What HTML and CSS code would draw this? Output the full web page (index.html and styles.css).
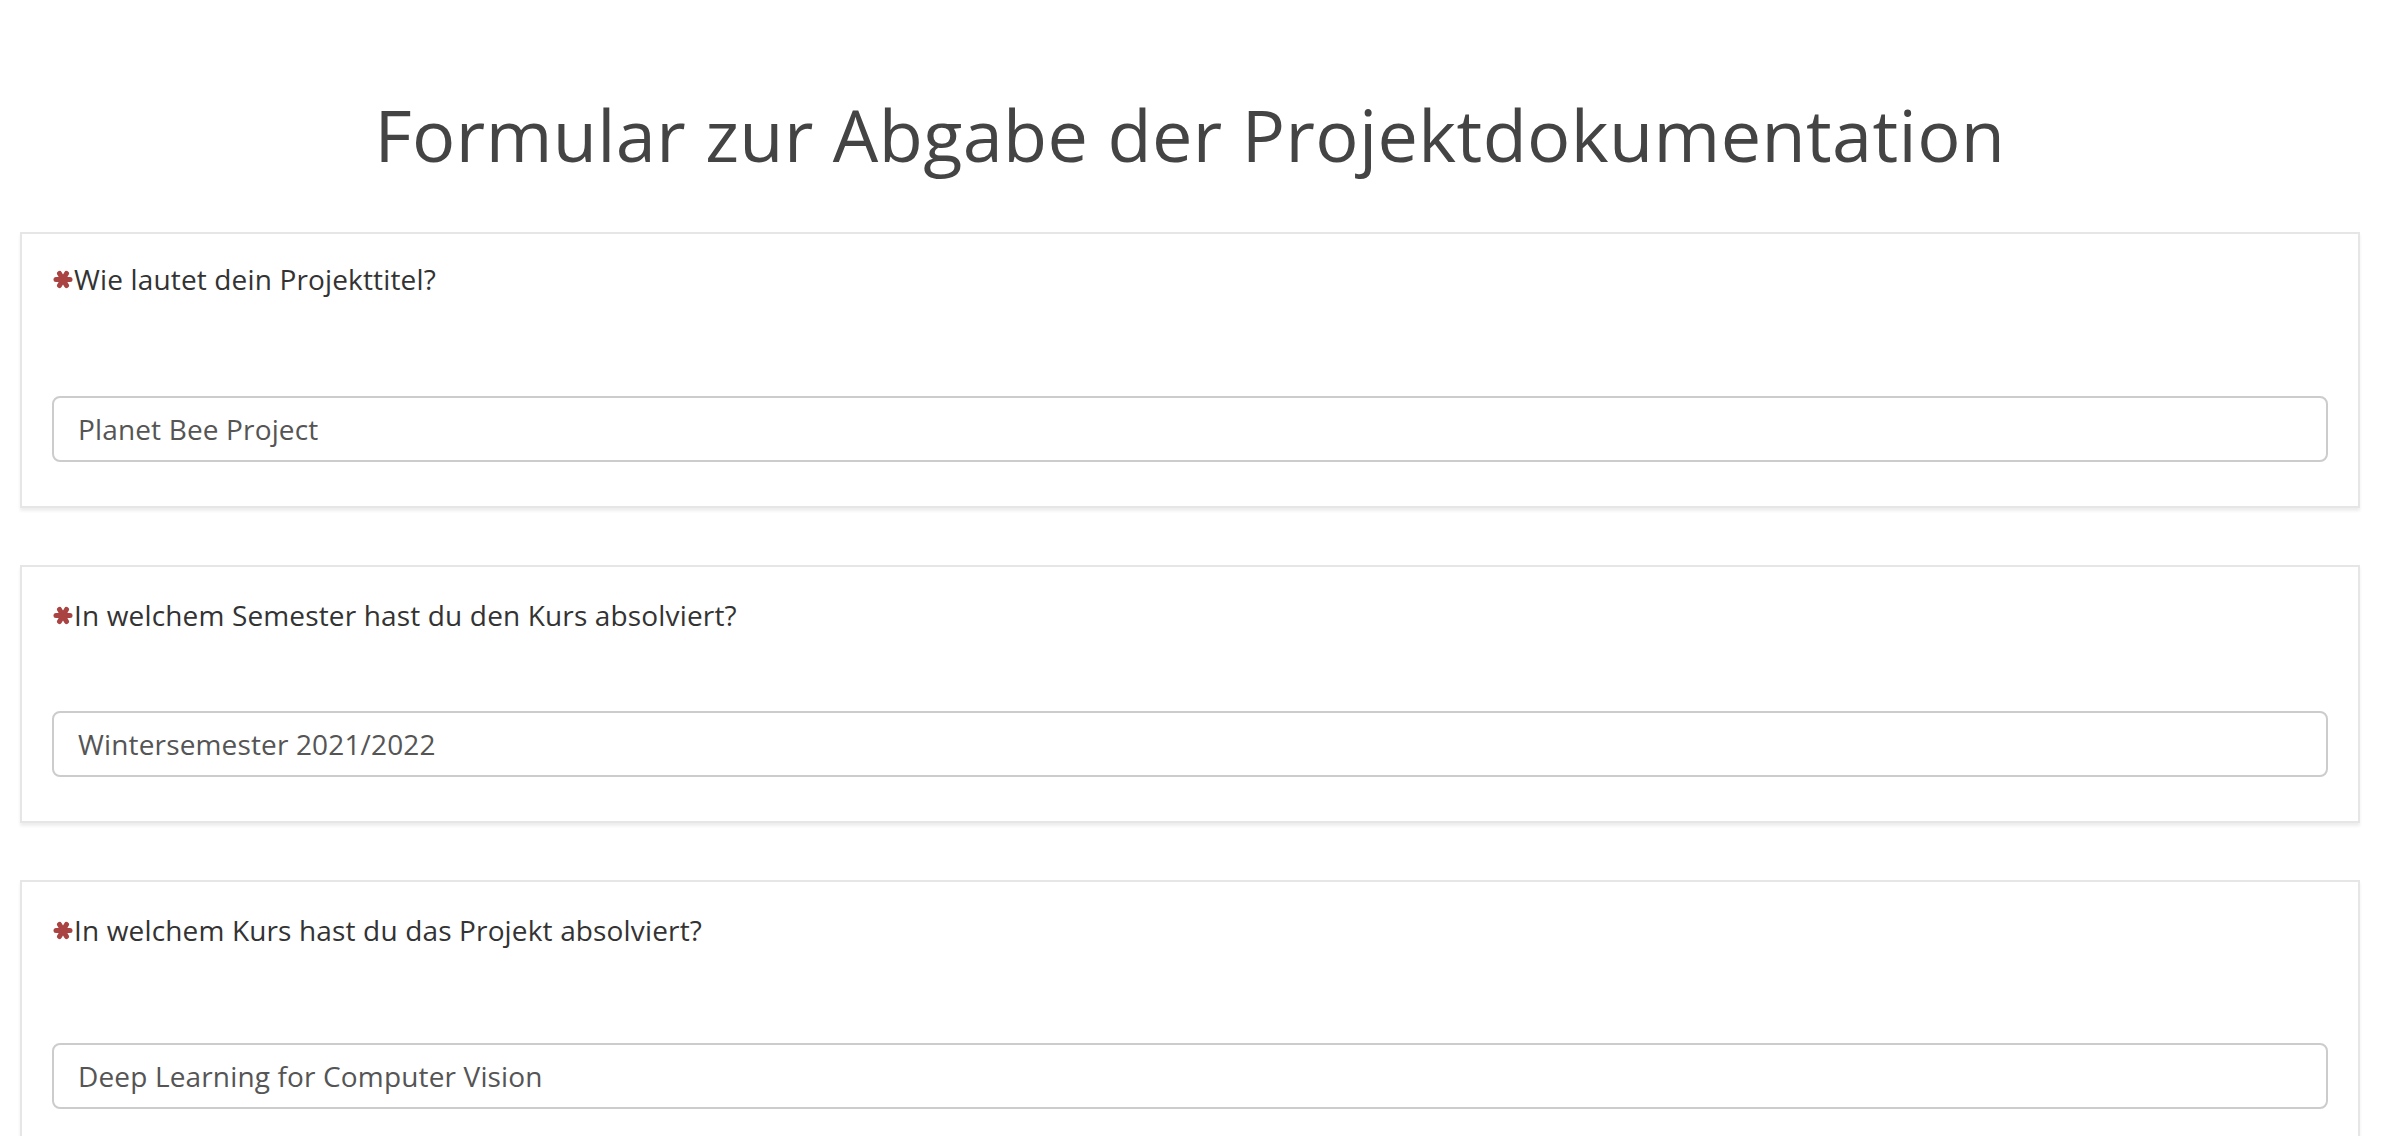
FILE: index.html
```html
<!DOCTYPE html>
<html lang="de">
<head>
<meta charset="utf-8">
<title>Formular zur Abgabe der Projektdokumentation</title>
<link rel="stylesheet" href="styles.css">
</head>
<body>
<div class="page">
  <h1 class="title">Formular zur Abgabe der Projektdokumentation</h1>

  <section class="card card--first">
    <label class="question">
      <svg class="req" viewBox="0 0 20 19" aria-hidden="true"><g stroke="#a94442" stroke-width="5" stroke-linecap="round"><line x1="3" y1="9.5" x2="17" y2="9.5"/><line x1="6.5" y1="3.4" x2="13.5" y2="15.6"/><line x1="13.5" y1="3.4" x2="6.5" y2="15.6"/></g></svg>
      <span>Wie lautet dein Projekttitel?</span>
    </label>
    <input class="field" type="text" value="Planet Bee Project">
  </section>

  <section class="card card--second">
    <label class="question">
      <svg class="req" viewBox="0 0 20 19" aria-hidden="true"><g stroke="#a94442" stroke-width="5" stroke-linecap="round"><line x1="3" y1="9.5" x2="17" y2="9.5"/><line x1="6.5" y1="3.4" x2="13.5" y2="15.6"/><line x1="13.5" y1="3.4" x2="6.5" y2="15.6"/></g></svg>
      <span>In welchem Semester hast du den Kurs absolviert?</span>
    </label>
    <input class="field" type="text" value="Wintersemester 2021/2022">
  </section>

  <section class="card card--third">
    <label class="question">
      <svg class="req" viewBox="0 0 20 19" aria-hidden="true"><g stroke="#a94442" stroke-width="5" stroke-linecap="round"><line x1="3" y1="9.5" x2="17" y2="9.5"/><line x1="6.5" y1="3.4" x2="13.5" y2="15.6"/><line x1="13.5" y1="3.4" x2="6.5" y2="15.6"/></g></svg>
      <span>In welchem Kurs hast du das Projekt absolviert?</span>
    </label>
    <input class="field" type="text" value="Deep Learning for Computer Vision">
  </section>
</div>
</body>
</html>
```

FILE: styles.css
```css
html, body {
  margin: 0;
  padding: 0;
  background: #ffffff;
}

body {
  font-family: "Open Sans", "Noto Sans", sans-serif;
  color: #333333;
  font-size: 28px;
  line-height: 40px;
}

.page {
  padding: 0 22px 40px 20px;
  display: flex;
  flex-direction: column;
}

.title {
  margin: 94px 0 58px;
  font-size: 72px;
  line-height: 80px;
  font-weight: 400;
  letter-spacing: 0.4px;
  color: #444444;
  text-align: center;
}

.card {
  border: 2px solid #e6e6e6;
  box-shadow: 0 3px 3px rgba(0, 0, 0, 0.07);
  background: #ffffff;
  padding: 25px 30px 44px;
  margin-bottom: 57px;
  display: flex;
  flex-direction: column;
}

.card--first .question { margin-bottom: 97px; }
.card--second { padding-top: 28px; padding-bottom: 44px; }
.card--second .question { margin-bottom: 76px; }
.card--third { padding-top: 28px; }
.card--third .question { margin-bottom: 93px; }

.question {
  display: flex;
  align-items: center;
  font-weight: 400;
  letter-spacing: 0.15px;
  color: #333333;
  height: 40px;
}

.req {
  width: 20px;
  height: 19px;
  margin-left: 1px;
  margin-right: 1px;
  flex: none;
}

.field {
  box-sizing: border-box;
  width: 100%;
  height: 66px;
  margin: 0;
  padding: 0 24px;
  border: 2px solid #cccccc;
  border-radius: 8px;
  font-family: "Open Sans", "Noto Sans", sans-serif;
  font-size: 28px;
  letter-spacing: 0.15px;
  color: #555555;
  background: #ffffff;
  outline: none;
}
```
